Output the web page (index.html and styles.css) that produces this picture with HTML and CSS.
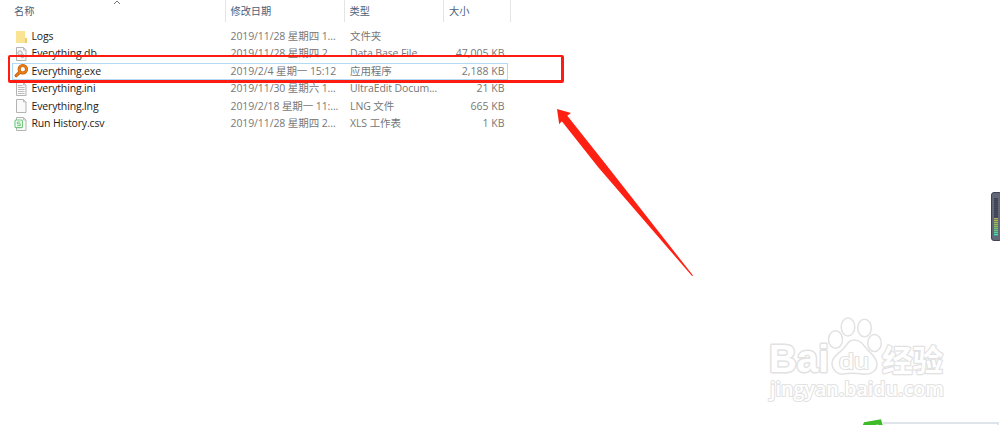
FILE: index.html
```html
<!DOCTYPE html>
<html lang="zh-CN">
<head>
    <meta charset="UTF-8">
    <title>Everything</title>
    <link rel="stylesheet" href="styles.css">
</head>
<body>
    <div class="explorer">
        <div class="row head">
            <span class="name">名称</span>
            <span class="date">修改日期</span>
            <span class="type">类型</span>
            <span class="size">大小</span>
            <svg class="sort" viewBox="0 0 8 5"><path d="M1 4L4 1L7 4"/></svg>
        </div>
        <div class="list">
            <div class="row">
                <svg class="icon" viewBox="0 0 14 14"><path d="M2 1H11V8H13V13H2Z" fill="#fbe394"/><path d="M11 8H13V13H11Z" fill="#edcf72"/></svg>
                <span class="name">Logs</span>
                <span class="date">2019/11/28 星期四 1...</span>
                <span class="type">文件夹</span>
                <span class="size"></span>
            </div>
            <div class="row">
                <svg class="icon" viewBox="0 0 14 14"><path class="paper" d="M2.5 .5H9.5L12 3V13.5H2.5Z"/><path class="fold" d="M9.5 .5V3H12"/><circle cx="6" cy="6" r="2.2" fill="#eee" stroke="#b0b5b8"/><circle cx="8.5" cy="9" r="1.7" fill="#eee" stroke="#b0b5b8"/></svg>
                <span class="name">Everything.db</span>
                <span class="date">2019/11/28 星期四 2...</span>
                <span class="type">Data Base File</span>
                <span class="size">47,005 KB</span>
            </div>
            <div class="row selected">
                <svg class="icon" viewBox="0 0 14 14"><path d="M2.2 11.6L6 8" stroke="#b85a10" stroke-width="3.2" stroke-linecap="round"/><circle cx="8.8" cy="5.2" r="3.7" fill="#fff" stroke="#b85a10" stroke-width="3"/><circle cx="8.8" cy="5.2" r="3.7" fill="none" stroke="#ee7c10" stroke-width="1.9"/><path d="M2.2 11.6L5.8 8.2" stroke="#ee7c10" stroke-width="1.8" stroke-linecap="round"/></svg>
                <span class="name">Everything.exe</span>
                <span class="date">2019/2/4 星期一 15:12</span>
                <span class="type">应用程序</span>
                <span class="size">2,188 KB</span>
            </div>
            <div class="row">
                <svg class="icon" viewBox="0 0 14 14"><path class="paper" d="M2.5 .5H9.5L12 3V13.5H2.5Z"/><path class="fold" d="M9.5 .5V3H12M4 3.5H8.5M4 5.5H10.5M4 7.5H10.5M4 9.5H10.5M4 11.5H10.5"/></svg>
                <span class="name">Everything.ini</span>
                <span class="date">2019/11/30 星期六 1...</span>
                <span class="type">UltraEdit Docum...</span>
                <span class="size">21 KB</span>
            </div>
            <div class="row">
                <svg class="icon" viewBox="0 0 14 14"><path class="paper" d="M2.5 .5H9.5L12 3V13.5H2.5Z"/><path class="fold" d="M9.5 .5V3H12"/></svg>
                <span class="name">Everything.lng</span>
                <span class="date">2019/2/18 星期一 11:...</span>
                <span class="type">LNG 文件</span>
                <span class="size">665 KB</span>
            </div>
            <div class="row">
                <svg class="icon" viewBox="0 0 14 14"><path class="paper" d="M2.5 .5H9.5L12 3V13.5H2.5Z"/><path class="fold" d="M9.5 .5V3H12"/><rect x="1" y="3" width="7.4" height="7.6" rx="1" fill="#fff" stroke="#6cc878" stroke-width="1.1"/><path d="M6.5 5H3.2V6.8H6.3V8.7H2.9" fill="none" stroke="#6cc878"/></svg>
                <span class="name">Run History.csv</span>
                <span class="date">2019/11/28 星期四 2...</span>
                <span class="type">XLS 工作表</span>
                <span class="size">1 KB</span>
            </div>
        </div>
    </div>

    <!-- 红框和箭头 -->
    <div class="frame"></div>
    <svg class="arrow" viewBox="0 0 140 172"><path d="M1 1L15 5L11.3 7.8L48 54L137 167.5L136 168L42 59L5.8 13.3L3.2 16.2Z"/></svg>

    <!-- 水印 -->
    <svg class="watermark" viewBox="0 0 190 95">
        <ellipse cx="74.5" cy="24.5" rx="7" ry="8.8"/>
        <ellipse cx="87" cy="12" rx="6.8" ry="9"/>
        <ellipse cx="103.5" cy="13" rx="6.8" ry="8.8"/>
        <ellipse cx="113.5" cy="28" rx="6.8" ry="8.5"/>
        <path d="M93.5 25C99 25 102 29 105 33S116 42 116 49S110 60 102 59S87 58 82 59S71 55 71 48S79 38 83 33S88 25 93.5 25Z"/>
        <text class="bai" x="8" y="57" textLength="60" lengthAdjust="spacingAndGlyphs">Bai</text>
        <text class="du" x="78" y="53.5" textLength="30" lengthAdjust="spacingAndGlyphs">du</text>
        <text class="cn" x="121" y="56" textLength="61" lengthAdjust="spacingAndGlyphs">经验</text>
        <text class="url" x="9" y="81" textLength="174" lengthAdjust="spacingAndGlyphs">jingyan.baidu.com</text>
    </svg>

    <div class="meter"><i></i></div>
    <svg class="corner" viewBox="0 0 140 7"><path d="M22 4H137V7" fill="none" stroke="#d3dce3" stroke-width="1.4"/><path d="M1.5 7L3 3.2L20 .3L22 7H18L17 5.5L9 7Z" fill="#3dbb28"/></svg>
</body>
</html>
```
FILE: styles.css
```css
body{
    margin: 0;
    height: 425px;
    position: relative;
    overflow: hidden;
    background: #fff;
    color: #777;
    font: 10.5px/17px "Open Sans", "Noto Sans CJK SC", sans-serif;
}
.explorer{
    width: 512px;
}
.row{
    display: flex;
    align-items: center;
    box-sizing: border-box;
    height: 17.45px;
    padding-left: 14px;
    white-space: nowrap;
}
.icon{
    width: 14px;
    height: 14px;
    margin-right: 3.5px;
}
.name{
    width: 199px;
    color: #1c1c1c;
    letter-spacing: -0.15px;
}
.date{
    width: 119.5px;
    letter-spacing: -0.1px;
}
.type{
    width: 94px;
    letter-spacing: -0.1px;
}
.size{
    width: 60.5px;
    text-align: right;
}
.list{
    padding-top: 5.8px;
}
.head{
    height: 22px;
    position: relative;
    color: #4c607a;
    font-size: 10.2px;
}
.head span{
    box-sizing: border-box;
    height: 22px;
    padding-top: 3px;
    border-right: 1px solid #e5e5e5;
    letter-spacing: 0;
}
.head .name{
    width: 212px;
    color: #4c607a;
}
.head .date{
    width: 119px;
    padding-left: 4.5px;
}
.head .type{
    width: 99px;
    padding-left: 4.5px;
}
.head .size{
    width: 67px;
    padding-left: 5px;
    text-align: left;
}
.sort{
    position: absolute;
    left: 113px;
    top: 0;
    width: 8px;
    height: 5px;
    fill: none;
    stroke: #777;
}
.selected{
    width: 496px;
    margin-left: 12px;
    padding-left: 2px;
    box-shadow: inset 0 0 0 1px #b3daf5;
}
.paper{
    fill: #fafafa;
    stroke: #b3b3b3;
}
.fold{
    fill: none;
    stroke: #bdbdbd;
}
.frame{
    position: absolute;
    left: 8px;
    top: 55px;
    width: 551px;
    height: 23px;
    border: 2.4px solid #fe1b10;
    border-width: 2px 3px 3px 2px;
    border-radius: 2px;
}
.arrow{
    position: absolute;
    left: 556px;
    top: 108px;
    width: 140px;
    height: 172px;
    fill: #fe2113;
}
.watermark{
    position: absolute;
    left: 761px;
    top: 315px;
    width: 190px;
    height: 95px;
    fill: #fff;
    stroke: #e2e2e2;
    stroke-width: 1.5px;
    stroke-linejoin: round;
    font-family: "Liberation Sans", "Noto Sans CJK SC", sans-serif;
    font-weight: bold;
}
.watermark text{
    paint-order: stroke;
}
.bai{
    font-size: 39px;
    stroke-width: 3px;
}
.du{
    font-size: 22px;
    font-weight: normal;
    stroke-width: 2px;
}
.cn{
    font-size: 30px;
    stroke-width: 2.4px;
}
.url{
    font: 600 19px/1 "Open Sans", sans-serif;
    stroke-width: 2px;
}
.meter{
    position: absolute;
    right: -2px;
    top: 192px;
    width: 9px;
    height: 47px;
    border: 1px solid #3f4350;
    border-radius: 3px;
    background: #626878;
}
.meter i{
    position: absolute;
    left: 2px;
    top: 5px;
    width: 4px;
    height: 38px;
    background: repeating-linear-gradient(transparent 0 1px, rgba(77, 83, 98, .5) 1px 2px), linear-gradient(#3e4453 52%, #b1ad58 53%, #8abd64 75%, #3ce0b4);
}
.corner{
    position: absolute;
    left: 861px;
    top: 419px;
    width: 140px;
    height: 7px;
}
```
